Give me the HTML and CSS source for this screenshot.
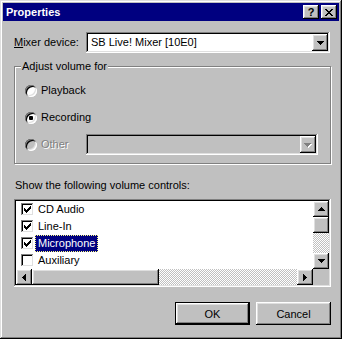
FILE: index.html
```html
<!DOCTYPE html>
<html lang="en">
<head>
  <meta charset="UTF-8">
  <title>Properties</title>
  <link rel="stylesheet" href="styles.css">
</head>
<body>
  <div class="window">
    <div class="title-bar">
      <span class="title">Properties</span>
      <div class="title-buttons">
        <button class="tb-btn help">?</button>
        <button class="tb-btn close">
          <svg width="8" height="7" viewBox="0 0 8 7"><path d="M0 0h2v1h-2z M6 0h2v1h-2z M1 1h2v1h-2z M5 1h2v1h-2z M2 2h4v1h-4z M3 3h2v1h-2z M2 4h4v1h-4z M1 5h2v1h-2z M5 5h2v1h-2z M0 6h2v1h-2z M6 6h2v1h-2z" fill="#000"/></svg>
        </button>
      </div>
    </div>

    <div class="content">
      <div class="mixer-row">
        <label class="mixer-label"><u>M</u>ixer device:</label>
        <div class="combo mixer-combo">
          <span class="combo-text">SB Live! Mixer [10E0]</span>
          <span class="raised combo-btn">
            <svg width="7" height="4" viewBox="0 0 7 4"><path d="M0 0H7V1H6V2H5V3H4V4H3V3H2V2H1V1H0Z" fill="#000"/></svg>
          </span>
        </div>
      </div>

      <div class="group">
        <span class="group-label">Adjust volume for</span>
        <div class="radio-row">
          <span class="radio"></span>
          <span>Playback</span>
        </div>
        <div class="radio-row">
          <span class="radio checked"></span>
          <span>Recording</span>
        </div>
        <div class="radio-row disabled">
          <span class="radio"></span>
          <span class="other-label">Other</span>
          <div class="combo other-combo">
            <span class="combo-text"></span>
            <span class="raised combo-btn">
              <svg width="8" height="5" viewBox="0 0 8 5"><path d="M1 1H8V2H7V3H6V4H5V5H4V4H3V3H2V2H1Z" fill="#fff"/><path d="M0 0H7V1H6V2H5V3H4V4H3V3H2V2H1V1H0Z" fill="#808080"/></svg>
            </span>
          </div>
        </div>
      </div>

      <p class="list-caption">Show the following volume controls:</p>

      <div class="listbox">
        <div class="list-main">
          <div class="list-items">
            <div class="item"><span class="check on"></span><span class="item-text">CD Audio</span></div>
            <div class="item"><span class="check on"></span><span class="item-text">Line-In</span></div>
            <div class="item"><span class="check on"></span><span class="item-text selected">Microphone</span></div>
            <div class="item"><span class="check"></span><span class="item-text">Auxiliary</span></div>
          </div>
          <div class="vscroll">
            <span class="raised sb-btn">
              <svg width="7" height="4" viewBox="0 0 7 4"><path d="M3 0H4V1H5V2H6V3H7V4H0V3H1V2H2V1H3Z" fill="#000"/></svg>
            </span>
            <span class="raised sb-thumb-v"></span>
            <span class="track"></span>
            <span class="raised sb-btn">
              <svg width="7" height="4" viewBox="0 0 7 4"><path d="M0 0H7V1H6V2H5V3H4V4H3V3H2V2H1V1H0Z" fill="#000"/></svg>
            </span>
          </div>
        </div>
        <div class="hscroll-row">
          <div class="hscroll">
            <span class="raised sb-btn">
              <svg width="4" height="7" viewBox="0 0 4 7"><path d="M3 0H4V7H3V6H2V5H1V4H0V3H1V2H2V1H3Z" fill="#000"/></svg>
            </span>
            <span class="raised sb-thumb-h"></span>
            <span class="track"></span>
            <span class="raised sb-btn">
              <svg width="4" height="7" viewBox="0 0 4 7"><path d="M0 0H1V1H2V2H3V3H4V4H3V5H2V6H1V7H0Z" fill="#000"/></svg>
            </span>
          </div>
          <span class="corner"></span>
        </div>
      </div>

      <div class="actions">
        <button class="btn default"><span class="raised btn-face">OK</span></button>
        <button class="btn raised">Cancel</button>
      </div>
    </div>
  </div>
</body>
</html>
```

FILE: styles.css
```css
* {
  margin: 0;
  padding: 0;
  box-sizing: border-box;
  font-family: 'Liberation Sans', Arial, sans-serif;
}
body {
  background: #c0c0c0;
  font-size: 11px;
  line-height: 13px;
  color: #000;
}
.window {
  width: 342px;
  height: 339px;
  padding: 3px;
  background: #c0c0c0;
  box-shadow: inset -1px -1px #000, inset 1px 1px #dfdfdf, inset -2px -2px #808080, inset 2px 2px #fff;
}
.raised {
  background: #c0c0c0;
  box-shadow: inset -1px -1px #000, inset 1px 1px #fff, inset -2px -2px #808080, inset 2px 2px #dfdfdf;
}

/* title bar */
.title-bar {
  height: 18px;
  background: #000080;
  display: flex;
  align-items: center;
  justify-content: space-between;
  padding: 0 2px 0 3px;
}
.title {
  color: #fff;
  font-weight: bold;
  font-size: 11px;
}
.title-buttons {
  display: flex;
  gap: 2px;
}
.tb-btn {
  width: 16px;
  height: 14px;
  border: none;
  background: #c0c0c0;
  box-shadow: inset -1px -1px #000, inset 1px 1px #fff, inset -2px -2px #808080, inset 2px 2px #dfdfdf;
  display: flex;
  align-items: center;
  justify-content: center;
}
.tb-btn.help {
  font-weight: bold;
  font-size: 11px;
  line-height: 11px;
  padding-top: 1px;
}
.tb-btn.close svg {
  margin: 1px 0 0 0;
}

/* main area */
.content {
  padding: 11px 8px 0 11px;
}
.mixer-row {
  display: flex;
  align-items: center;
}
.mixer-label {
  width: 72px;
}
.combo {
  height: 21px;
  display: flex;
  align-items: stretch;
  padding: 2px;
  background: #fff;
  box-shadow: inset -1px -1px #fff, inset 1px 1px #808080, inset -2px -2px #dfdfdf, inset 2px 2px #000;
}
.mixer-combo {
  width: 244px;
}
.combo-text {
  flex: 1;
  display: flex;
  align-items: center;
  padding-left: 3px;
}
.combo-btn {
  width: 16px;
  display: flex;
  align-items: center;
  justify-content: center;
  padding-top: 1px;
}

/* group box */
.group {
  position: relative;
  margin-top: 13px;
  height: 98px;
  border: 1px solid #808080;
  box-shadow: inset 1px 1px #fff, 1px 1px #fff;
  padding: 10px 0 0 10px;
}
.group-label {
  position: absolute;
  top: -7px;
  left: 6px;
  padding: 0 1px;
  background: #c0c0c0;
}
.radio-row {
  height: 27px;
  display: flex;
  align-items: center;
  gap: 4px;
}
.radio {
  width: 12px;
  height: 12px;
  border-radius: 50%;
  background: #fff;
  position: relative;
  box-shadow: inset 1px 1px #808080, inset -1px -1px #fff, inset 2px 2px #000, inset -2px -2px #dfdfdf;
}
.radio.checked::after {
  content: "";
  position: absolute;
  left: 4px;
  top: 4px;
  width: 4px;
  height: 4px;
  border-radius: 1px;
  background: #000;
}
.disabled {
  color: #808080;
}
.disabled .radio {
  background: #c0c0c0;
}
.disabled .other-label {
  width: 41px;
  text-shadow: 1px 1px #fff;
}
.other-combo {
  width: 232px;
  background: #c0c0c0;
}

/* list */
.list-caption {
  margin: 15px 0 7px 1px;
}
.listbox {
  width: 317px;
  height: 88px;
  padding: 2px;
  background: #fff;
  box-shadow: inset -1px -1px #fff, inset 1px 1px #808080, inset -2px -2px #dfdfdf, inset 2px 2px #000;
}
.list-main {
  display: flex;
  height: 68px;
}
.list-items {
  flex: 1;
}
.item {
  height: 17px;
  display: flex;
  align-items: center;
  padding-left: 5px;
  gap: 1px;
}
.check {
  width: 13px;
  height: 13px;
  background: #fff;
  box-shadow: inset -1px -1px #fff, inset 1px 1px #808080, inset -2px -2px #dfdfdf, inset 2px 2px #000;
  position: relative;
}
.check.on::after {
  content: "";
  position: absolute;
  left: 3px;
  top: 3px;
  width: 7px;
  height: 7px;
  background: url("data:image/svg+xml,%3Csvg xmlns='http://www.w3.org/2000/svg' width='7' height='7' viewBox='0 0 7 7'%3E%3Cpath d='M0 2H1V3H2V4H3V3H4V2H5V1H6V0H7V3H6V4H5V5H4V6H3V7H2V6H1V5H0Z' fill='%23000'/%3E%3C/svg%3E");
}
.item-text {
  padding: 1px 2px;
  border: 1px dotted transparent;
}
.item-text.selected {
  background: #000080;
  color: #fff;
  border-color: #ffff80;
}
.vscroll {
  width: 16px;
  display: flex;
  flex-direction: column;
}
.sb-btn {
  width: 16px;
  height: 16px;
  display: flex;
  align-items: center;
  justify-content: center;
  flex: none;
}
.sb-thumb-v {
  height: 16px;
}
.track {
  flex: 1;
  background: repeating-conic-gradient(#c0c0c0 0 25%, #fff 0 50%) 0 0 / 2px 2px;
}
.hscroll-row {
  display: flex;
  height: 16px;
}
.hscroll {
  flex: 1;
  display: flex;
}
.sb-thumb-h {
  width: 127px;
}
.corner {
  width: 16px;
  background: #c0c0c0;
}

/* buttons */
.actions {
  margin-top: 15px;
  display: flex;
  justify-content: flex-end;
  gap: 6px;
  width: 317px;
}
.btn {
  width: 75px;
  height: 23px;
  border: none;
  font-size: 11px;
  color: #000;
}
.btn.default {
  border: 1px solid #000;
  background: #c0c0c0;
  display: flex;
}
.btn-face {
  flex: 1;
  display: flex;
  align-items: center;
  justify-content: center;
}
```
